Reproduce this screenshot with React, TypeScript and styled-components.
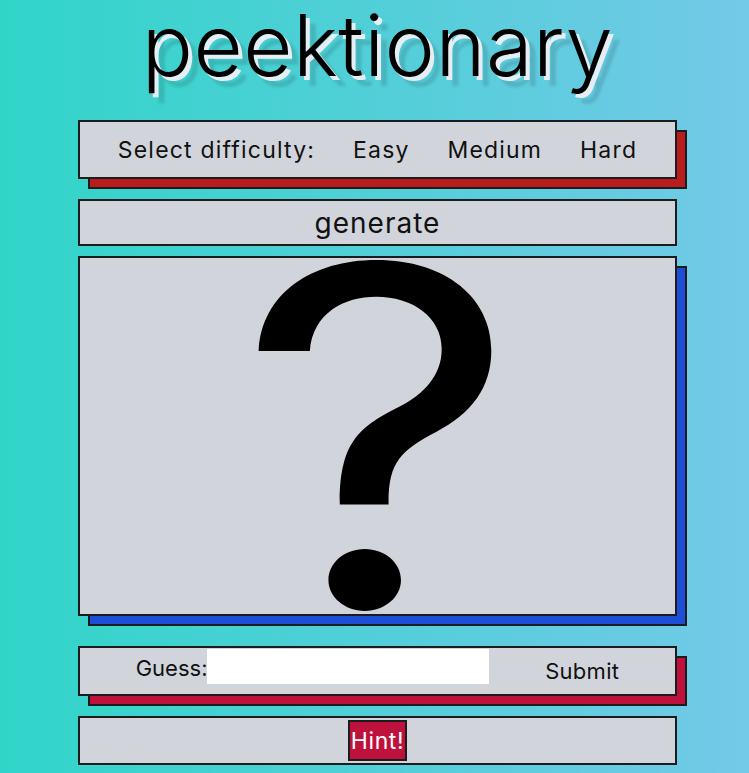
import styled, { createGlobalStyle } from "styled-components";

const GlobalStyle = createGlobalStyle`
    html, body {
        margin: 0;
        padding: 0;
        min-height: 100%;
    }
    body {
        background: linear-gradient(90deg, #30d5c8 0%, #73c9e8 100%);
        font-family: Inter, "Liberation Sans", sans-serif;
        color: #111;
        min-height: 773px;
        overflow: hidden;
    }
`;

const App = () => {
    return (
        <>
            <GlobalStyle />
            <StyledPage>
                <StyledTitle>peektionary</StyledTitle>
                <StyledPanel $shadow="#b91c1c" $height={59} $gap={20}>
                    <StyledDifficulty>
                        <span>Select difficulty:</span>
                        <StyledTextButton>Easy</StyledTextButton>
                        <StyledTextButton>Medium</StyledTextButton>
                        <StyledTextButton>Hard</StyledTextButton>
                    </StyledDifficulty>
                </StyledPanel>
                <StyledPanel $height={47} $gap={10}>
                    <StyledGenerate>generate</StyledGenerate>
                </StyledPanel>
                <StyledPanel $shadow="#1d4ed8" $height={360} $gap={30}>
                    <StyledMystery>
                        <span>?</span>
                    </StyledMystery>
                </StyledPanel>
                <StyledPanel $shadow="#be123c" $height={50} $gap={20}>
                    <StyledGuessForm onSubmit={(e) => e.preventDefault()}>
                        <StyledLabel>
                            Guess:
                            <StyledInput type="text" />
                        </StyledLabel>
                        <StyledTextButton type="submit">Submit</StyledTextButton>
                    </StyledGuessForm>
                </StyledPanel>
                <StyledPanel $height={49} $gap={0}>
                    <StyledHint>Hint!</StyledHint>
                </StyledPanel>
            </StyledPage>
        </>
    );
};

const StyledPage = styled.main`
    display: flex;
    flex-direction: column;
    align-items: center;
    padding-left: 6px;
`;

const StyledTitle = styled.h1`
    margin: 0;
    height: 120px;
    font-size: 85px;
    font-weight: 300;
    line-height: 92px;
    letter-spacing: 0.5px;
    color: #000;
    text-shadow: 4px 4px 0 #e6eef4, 10px 10px 3px rgba(0, 0, 0, 0.13);
`;

const StyledPanel = styled.section<{ $shadow?: string; $height: number; $gap: number }>`
    box-sizing: border-box;
    width: 599px;
    height: ${({ $height }) => $height}px;
    margin-bottom: ${({ $gap }) => $gap}px;
    background: #d1d5db;
    border: 2px solid #1c1c1c;
    display: flex;
    align-items: center;
    justify-content: center;
    box-shadow: ${({ $shadow }) =>
        $shadow ? `10px 10px 0 -2px ${$shadow}, 10px 10px 0 0 #1c1c1c` : "none"};
`;

const StyledDifficulty = styled.div`
    width: 100%;
    display: flex;
    justify-content: space-evenly;
    align-items: center;
    font-size: 23px;
    letter-spacing: 1.2px;
`;

const StyledTextButton = styled.button`
    background: none;
    border: 0;
    padding: 0;
    font: inherit;
    letter-spacing: inherit;
    color: inherit;
    cursor: pointer;
`;

const StyledGenerate = styled(StyledTextButton)`
    font-size: 28px;
    letter-spacing: 1px;
`;

const StyledMystery = styled.div`
    height: 100%;
    width: 100%;
    display: flex;
    justify-content: center;
    align-items: center;
    overflow: hidden;
    color: #000;

    & span {
        display: block;
        font-size: 472px;
        line-height: 340px;
        height: 340px;
        transform: translateY(1px) scaleX(1.17);
    }
`;

const StyledGuessForm = styled.form`
    width: 100%;
    display: flex;
    justify-content: space-evenly;
    align-items: center;
    font-size: 22px;
    letter-spacing: 0.3px;
`;

const StyledLabel = styled.label`
    display: flex;
    align-items: flex-start;
    margin-bottom: 4px;
    letter-spacing: 0;
`;

const StyledInput = styled.input`
    width: 282px;
    height: 35px;
    box-sizing: border-box;
    border: 0;
    background: #fff;
    margin-top: -6px;
    outline: none;
`;

const StyledHint = styled.button`
    height: 41px;
    padding: 0 1px;
    background: #be123c;
    border: 2px solid #1c1c1c;
    color: #fff;
    font-family: inherit;
    font-size: 23px;
    letter-spacing: 0.6px;
    cursor: pointer;
`;

export default App;
